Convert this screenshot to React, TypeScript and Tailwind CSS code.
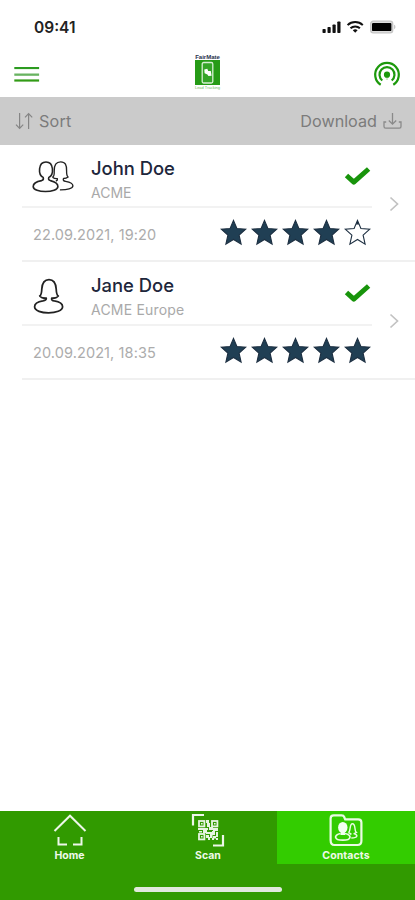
import React from "react";

type Contact = {
  name: string;
  company: string;
  date: string;
  rating: number;
  group: boolean;
};

const contacts: Contact[] = [
  { name: "John Doe", company: "ACME", date: "22.09.2021, 19:20", rating: 4, group: true },
  { name: "Jane Doe", company: "ACME Europe", date: "20.09.2021, 18:35", rating: 5, group: false },
];

function StatusIcons() {
  return (
    <svg width="76" height="16" viewBox="0 0 76 16" fill="none">
      <g fill="#111">
        <rect x="0.5" y="9" width="3.2" height="4" rx="0.8" />
        <rect x="5.5" y="7" width="3.2" height="6" rx="0.8" />
        <rect x="10.5" y="4.5" width="3.2" height="8.5" rx="0.8" />
        <rect x="15.3" y="1.5" width="3.2" height="11.5" rx="0.8" />
      </g>
      <g stroke="#111" strokeWidth="2">
        <path d="M25.6 5.1a11 11 0 0 1 15.2 0" />
        <path d="M28.5 8.3a6.8 6.8 0 0 1 9.4 0" />
      </g>
      <path d="M30.8 10.3a3.6 3.6 0 0 1 4.8 0l-2.4 2.5z" fill="#111" />
      <rect x="48.7" y="1.2" width="22" height="11.6" rx="2.6" fill="#ddd" stroke="#c4c4c4" strokeWidth="1.3" />
      <rect x="50" y="2.9" width="19.4" height="8.2" rx="1.2" fill="#000" />
      <path d="M72.2 4.8c1.6.6 1.6 3.8 0 4.4z" fill="#bdbdbd" />
    </svg>
  );
}

function Logo() {
  return (
    <div className="flex w-[26px] flex-col items-center font-['Liberation_Sans',sans-serif]">
      <div className="h-[6px] whitespace-nowrap text-[6px] font-bold leading-[6px] text-[#28304c]">FairMate</div>
      <svg width="25" height="25" viewBox="0 0 25 25">
        <rect width="25" height="25" fill="#269b16" />
        <rect x="7.2" y="2.5" width="10.6" height="20.5" rx="1.5" fill="#35a528" stroke="#d7efd3" strokeWidth="1.3" />
        <path d="M9.3 9.5l3-.8.9 2.2 2.6.2.8 4.6-3.2.3-1-1.500-2.800-1.200z" fill="#fff" />
      </svg>
      <div className="h-[5px] whitespace-nowrap text-[4px] leading-[5px] text-[#71bb62]">Lead Tracking</div>
    </div>
  );
}

function Beacon() {
  return (
    <svg width="28" height="26" viewBox="0 0 28 26" fill="none" stroke="#1c990c" strokeWidth="2.2">
      <path d="M7.7 23.7a11.8 11.8 0 1 1 12.6 0" />
      <path d="M9.3 19.5a7.5 7.5 0 1 1 9.4 0" />
      <circle cx="14" cy="13.7" r="3.1" fill="#1c990c" stroke="none" />
      <path d="M14 15v4" strokeWidth="1.2" opacity="0.35" />
    </svg>
  );
}

function SortIcon() {
  return (
    <svg width="19" height="18" viewBox="0 0 19 18" fill="none" stroke="#858585" strokeWidth="1.2">
      <path d="M4.6 1v15M1 12.6l3.6 3.7 3.6-3.7M13.6 17V2M10 5.4l3.6-3.7 3.6 3.7" />
    </svg>
  );
}

function DownloadIcon() {
  return (
    <svg width="19" height="18" viewBox="0 0 19 18" fill="none" stroke="#8a8a8a" strokeWidth="1.3">
      <path d="M9.5 1v11M5.8 8.5l3.7 3.7 3.7-3.7M3.2 10H1v4.5q0 1.6 1.6 1.6h13.8q1.6 0 1.6-1.6V10h-2.2" />
    </svg>
  );
}

function GroupIcon() {
  return (
    <svg width="42" height="34" viewBox="0 0 42 34" fill="none" stroke="#222" strokeWidth="1.6" strokeLinejoin="round">
      <path d="M11.2 17.4C5.9 14.8 5.9 2 14 2c8.1 0 8.1 12.800 2.800 15.400-.6 1.800-.2 2.600 1.600 3.200 4.500 1.100 7.500 3.400 7.500 5.800 0 6.700-24.700 7-24.700 0 0-2.600 3.700-4.900 8.400-5.800 1.800-.6 2.200-1.400 1.600-3.200z" />
      <path
        d="M20.3 17.2c2.2-.3 2-3.1 1.9-6.1C22 4.7 24.2 1.8 28.7 1.8c4.6 0 6.1 3.2 5.9 9.3-.1 3.7.2 5 1.5 5.9-1.2 1-2.9 1.5-4.6 1.5-.7 1.8.1 2.5 2.1 2.8 4.7.8 7.3 2.4 7.3 4.5 0 2.8-5.8 4.2-13 4.1M20.5 17.2c1.4 1.2 3 1.5 4.9 1.4.3 1.1-.2 2-1.5 2.6"
        strokeWidth="1.35"
      />
    </svg>
  );
}

function PersonIcon() {
  return (
    <svg width="32" height="37" viewBox="0 0 32 37" fill="none" stroke="#222" strokeWidth="1.75" strokeLinejoin="round">
      <path d="M13.3 20.2c-2.6.1-5.300-.6-6.600-2.200 1.900-1 1.900-3.600 2.100-7C9.200 4.600 11.100 1.600 16 1.600c4.900 0 6.800 3 7.200 9.400.2 3.400.2 6 2.100 7-1.300 1.600-4 2.300-6.600 2.200-.4 1.700.500 2.300 2.600 2.700 5.100.8 8.300 2.800 8.300 5.900 0 7.900-28 8.100-28 0 0-3.100 3.200-5.100 8.300-5.900 2.100-.4 3.500-1 3.400-2.700z" />
    </svg>
  );
}

function Star({ filled }: { filled: boolean }) {
  return (
    <svg width="27" height="27" viewBox="0 0 27 27">
      <path
        d="M13.5 1.4l3.4 8.100 8.900.7-6.700 6 2 8.900-7.600-4.600-7.600 4.600 2-8.900-6.700-6 8.900-.7z"
        fill={filled ? "#203f54" : "#fff"}
        stroke="#1c2e40"
        strokeWidth="1.1"
      />
      {!filled && <path d="M13.5 1.5l1.7 3.9h-3.4z" fill="#1c2e40" />}
    </svg>
  );
}

function ContactRow({ contact }: { contact: Contact }) {
  return (
    <article className="ml-[22px] h-[117.5px] border-b-2 border-[#f0f0f0]">
      <div className="flex h-full">
        <div className="w-[350px]">
          <div className="flex h-[63.5px] border-b-2 border-[#f2f2f2]">
            <div className={contact.group ? "ml-[10px] w-[59px] pt-[15px]" : "ml-[11px] w-[58px] pt-[15.5px]"}>
              {contact.group ? <GroupIcon /> : <PersonIcon />}
            </div>
            <div className="flex-1 pt-[12px]">
              <h2 className="text-[18.4px] font-medium leading-[22px] text-[#20263b]">{contact.name}</h2>
              <p
                className={
                  contact.group
                    ? "mt-[5px] text-[14px] leading-[18px] text-[#a9a9a9]"
                    : "mt-[5px] text-[14px] leading-[18px] tracking-[0.2px] text-[#a9a9a9]"
                }
              >
                {contact.company}
              </p>
            </div>
            <svg className="mr-[1px] mt-[20px]" width="27" height="23" viewBox="0 0 27 23" fill="none">
              <path d="M2.5 10.5l7.3 6.6L24.6 4" stroke="#18940b" strokeWidth="5" strokeLinejoin="round" />
            </svg>
          </div>
          <div className="flex items-start justify-between pt-[11px]">
            <time className="ml-[11px] pt-[3px] text-[14.5px] leading-[26px] tracking-[0.1px] text-[#acacac]">
              {contact.date}
            </time>
            <div className="mr-[1px] flex gap-[4px]">
              {[1, 2, 3, 4, 5].map((n) => (
                <Star key={n} filled={n <= contact.rating} />
              ))}
            </div>
          </div>
        </div>
        <svg className="ml-[17px] mt-[51px]" width="11" height="16" viewBox="0 0 11 16" fill="none">
          <path d="M1.5 1.5l7 6.5-7 6.5" stroke="#c2c2c2" strokeWidth="1.7" />
        </svg>
      </div>
    </article>
  );
}

function HomeIcon() {
  return (
    <svg width="36" height="36" viewBox="0 0 36 36" fill="none" stroke="#edf7e9" strokeWidth="2">
      <path d="M2.5 19L18 3.7 33.5 19" />
      <path d="M6.5 25v7.5H15M21 32.5h8.5V25" />
    </svg>
  );
}

function ScanIcon() {
  return (
    <svg width="34" height="36" viewBox="0 0 34 36" fill="none">
      <path d="M2 13.5V3h11M22 33.5h10V23" stroke="#edf7e9" strokeWidth="2.2" />
      <g stroke="#e7f4e1" strokeWidth="1.8">
        <rect x="8" y="9" width="5.4" height="5.4" />
        <rect x="21" y="9" width="5.4" height="5.4" />
        <rect x="8" y="22" width="5.4" height="5.4" />
      </g>
      <path
        d="M10 11h1.6v1.6H10zM23 11h1.6v1.6H23zM10 24h1.6v1.6H10zM15 8h3v3h-3zM16 11h3v4h-3zM7 16h4v2H7zM11 16h6v2h-6zM18 15h4v3h-4zM22 16h5v3h-5zM8 19h3v1.5H8zM12 18h4v3h-4zM15 20h6v2h-6zM21 19h3v4h-3zM25 20h2v5h-2zM15 23h3v3h-3zM19 22h2.5v4H19zM17 25h2v3h-2zM22 24h3v2.5h-3zM21 26h2v2h-2zM25 26h2v2h-2z"
        fill="#e7f4e1"
      />
    </svg>
  );
}

function FolderIcon() {
  return (
    <svg width="36" height="36" viewBox="0 0 36 36" fill="none" stroke="#eafbe4">
      <path
        d="M2.6 28V6.5Q2.6 3.4 5.7 3.4h8q2 0 2.5 1.6l1 2.4h13q3.2 0 3.2 3.2V29q0 4-4 4h-23q-3.8 0-3.8-5z"
        strokeWidth="2.2"
      />
      <ellipse cx="14.8" cy="15.5" rx="4.7" ry="5.5" fill="#f2fff0" stroke="none" />
      <path d="M13 19h3.6l.6 4h-4.8z" fill="#f2fff0" stroke="none" />
      <path d="M12.6 21.5c-7.2 1.3-6.8 6.7 2.2 6.7s9.4-5.4 2.2-6.7" strokeWidth="1.7" />
      <path
        d="M20.5 20.5c2.4-1 .7-8.7 3.9-8.7 3.7 0 1.7 7.8 4 8.7-1 .9-1.8 1-2.8 1.1 5.1 1.4 4.2 4.4-2.3 4.4M20.2 20.6l2.6 1-.2 1.2"
        strokeWidth="1.4"
      />
    </svg>
  );
}

export default function App() {
  return (
    <main className="flex h-[900px] w-[415px] flex-col overflow-hidden bg-white font-[Inter,sans-serif]">
      <header className="h-[97px]">
        <div className="flex h-[53px] items-start justify-between pl-[34px] pr-[17px]">
          <span className="pt-[18px] text-[15.5px] font-semibold leading-[19px] text-[#222]">09:41</span>
          <div className="pt-[20px]">
            <StatusIcons />
          </div>
        </div>
        <div className="grid grid-cols-3 items-start">
          <svg className="ml-[14px] mt-[13px]" width="26" height="17" viewBox="0 0 26 17">
            <rect x="0.3" y="1" width="24.8" height="2.1" fill="#2c9b20" />
            <rect x="0.3" y="7.5" width="24.8" height="2.3" fill="#69b361" />
            <rect x="0.3" y="13.4" width="24.8" height="2.2" fill="#329b16" />
          </svg>
          <div className="flex justify-center pt-[1px]">
            <Logo />
          </div>
          <div className="flex justify-end pr-[13.5px] pt-[8px]">
            <Beacon />
          </div>
        </div>
      </header>
      <div className="flex h-[47.5px] items-center justify-between bg-[#cbcbcb] pl-[15px] pr-[13px] text-[16.2px] text-[#7b7b7b]">
        <button className="flex items-center gap-[5px]">
          <SortIcon />
          <span className="tracking-[0.2px]">Sort</span>
        </button>
        <button className="flex items-center gap-[6px]">
          <span>Download</span>
          <DownloadIcon />
        </button>
      </div>
      <section className="flex-1">
        {contacts.map((contact) => (
          <ContactRow key={contact.name} contact={contact} />
        ))}
      </section>
      <footer className="flex h-[89px] flex-col bg-[#319a00]">
        <nav className="flex h-[53px] text-[10.5px] font-bold leading-[13px] text-[#effae9]">
          <button className="flex w-[139px] flex-col items-center pt-[1px]">
            <HomeIcon />
            <span className="mt-[1px]">Home</span>
          </button>
          <button className="flex w-[138px] flex-col items-center pt-[1px]">
            <ScanIcon />
            <span className="mt-[1px]">Scan</span>
          </button>
          <button className="flex w-[138px] flex-col items-center bg-[#33cc00] pt-[1px]">
            <FolderIcon />
            <span className="mt-[1px] tracking-[0.1px]">Contacts</span>
          </button>
        </nav>
        <div className="mt-[23px] h-[5px] w-[148px] self-center rounded-full bg-[#e1e9dd]" />
      </footer>
    </main>
  );
}
